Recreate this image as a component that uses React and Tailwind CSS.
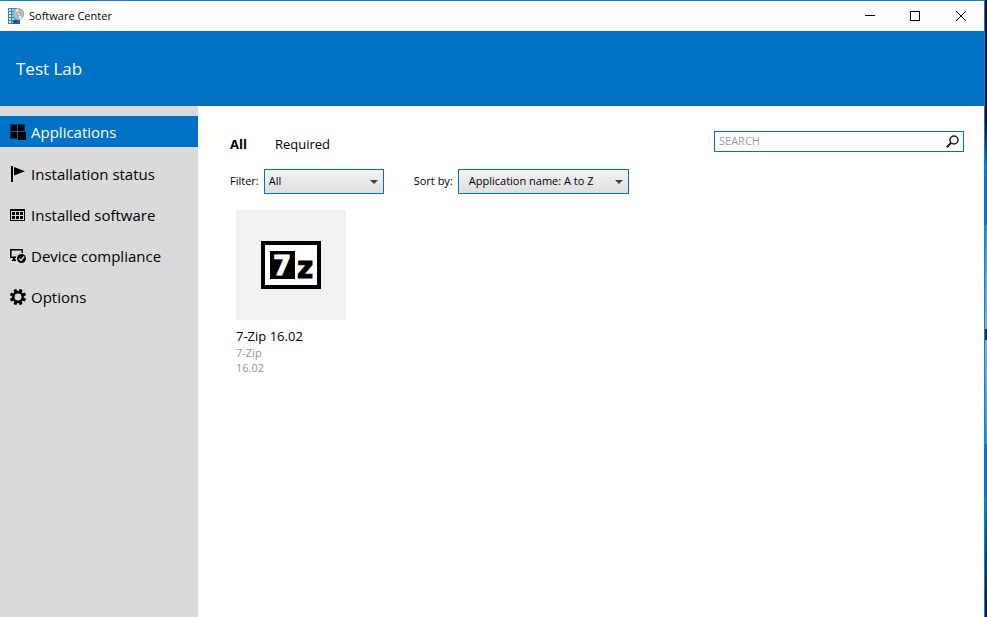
const navItems = [
  { label: 'Applications', icon: AppsIcon, active: true },
  { label: 'Installation status', icon: FlagIcon },
  { label: 'Installed software', icon: GridIcon },
  { label: 'Device compliance', icon: DeviceIcon },
  { label: 'Options', icon: GearIcon },
];

function AppsIcon() {
  return (
    <svg width="16" height="16" viewBox="0 0 16 16" aria-hidden="true">
      <path d="M0 0h15v15H0z" fill="#04335c" />
      <path d="M1 1h6v6H1zM8 1h6v6H8zM1 8h6v6H1z" fill="#000" />
      <path d="M7 1h1v13H7zM1 7h13v1H1z" fill="#0a5ea5" />
      <path d="M8 8h8v8H8z" fill="#000" />
    </svg>
  );
}

function FlagIcon() {
  return (
    <svg width="16" height="16" viewBox="0 0 16 16" aria-hidden="true">
      <path d="M1 0h2v16H1zM4 1l11 4.3L4 9.5z" />
    </svg>
  );
}

function GridIcon() {
  return (
    <svg width="16" height="16" viewBox="0 0 16 16" aria-hidden="true">
      <path fillRule="evenodd" d="M0 2h15v12H0zM1 4v9h13V4z" />
      <path d="M2 5h3v3H2zM6 5h3v3H6zM10 5h3v3h-3zM2 9h3v3H2zM6 9h3v3H6zM10 9h3v3h-3z" />
    </svg>
  );
}

function DeviceIcon() {
  return (
    <svg width="16" height="16" viewBox="0 0 16 16" aria-hidden="true">
      <path d="M6 9.200H.8V1.800h11.400V5" fill="none" stroke="#000" strokeWidth="1.500" />
      <path d="M3 9h2v2.500h1V13H2v-1.500h1z" />
      <circle cx="11.500" cy="10.500" r="4.500" />
      <path d="M9 10.500l2 2 3.200-4" fill="none" stroke="#dadada" strokeWidth="1.400" />
    </svg>
  );
}

function GearIcon() {
  const teeth = [0, 45, 90, 135, 180, 225, 270, 315];
  return (
    <svg width="16" height="16" viewBox="0 0 16 16" aria-hidden="true">
      <circle cx="8" cy="8" r="4.700" fill="none" stroke="#000" strokeWidth="2.500" />
      {teeth.map((angle) => (
        <path key={angle} d="M6.200 3L6.500-.2h3l.3 3.200z" transform={`rotate(${angle + 22.5} 8 8)`} />
      ))}
    </svg>
  );
}

function SoftwareCenterIcon() {
  return (
    <svg width="16" height="16" viewBox="0 0 16 16" aria-hidden="true">
      <path d="M0 0h9v16H0z" fill="#2f86c8" />
      <path d="M1 1h2v2H1zM1 4h2v2H1zM1 7h2v2H1zM1 10h2v2H1zM1 13h2v2H1z" fill="#d8f0fb" />
      <path d="M4 1h4v2H4zM4 4h3v2H4zM4 7h3v2H4zM4 10h3v2H4zM4 13h1v2H4z" fill="#8fcbee" />
      <circle cx="10.500" cy="6" r="5.500" fill="#b9bbbd" stroke="#85898c" strokeWidth=".6" />
      <path d="M10.500 6L7 2a5.300 5.300 0 0 1 3-1.300zM10.500 6l4 3.500a5.300 5.300 0 0 1-3 1.700z" fill="#e6e7e8" />
      <circle cx="10.500" cy="6" r="1.500" fill="#fff" stroke="#777" strokeWidth=".7" />
      <path d="M5 12h7v4H5z" fill="#1467b0" />
      <path d="M6 13h3v1H6z" fill="#0c3d73" />
    </svg>
  );
}

function SevenZipLogo() {
  return (
    <svg width="60" height="48" viewBox="0 0 60 48" role="img" aria-label="7-Zip logo">
      <rect width="60" height="48" fill="#000" />
      <rect x="4" y="4" width="52" height="40" fill="#fff" />
      <rect x="9" y="10" width="25" height="28" fill="#000" />
      <text x="12" y="34" fill="#fff" stroke="#fff" strokeWidth="1" className="font-['DejaVu_Sans',sans-serif] text-[26px] font-bold">7</text>
      <text x="36" y="37" fill="#000" stroke="#000" strokeWidth="1" className="font-['DejaVu_Sans_Condensed','DejaVu_Sans',sans-serif] text-[31px] font-bold">z</text>
    </svg>
  );
}

function Dropdown({ id, label, value, boxClass }) {
  return (
    <div className="flex items-center gap-[5px]">
      <label htmlFor={id}>{label}</label>
      <div className="relative">
        <select
          id={id}
          className={`block h-[25px] appearance-none border border-[#0072c6] bg-linear-to-b from-[#f3f3f3] to-[#dfdfdf] ${boxClass}`}
        >
          <option>{value}</option>
        </select>
        <svg className="pointer-events-none absolute top-[11px] right-[6px]" width="8" height="4" viewBox="0 0 8 4" aria-hidden="true">
          <path d="M0 0h8L4 4z" fill="#404040" />
        </svg>
      </div>
    </div>
  );
}

export default function App() {
  return (
    <div className="flex min-h-screen bg-white font-['Open_Sans','Noto_Sans',sans-serif] text-[11px] text-black">
      <div className="flex min-w-0 flex-1 flex-col border-t border-r border-[#1a7dcc]">
        <div className="flex h-[30px] shrink-0 items-center pl-2">
          <SoftwareCenterIcon />
          <span className="ml-[5px] flex-1">Software Center</span>
          <button aria-label="Minimize" className="flex h-full w-[45px] items-center justify-center">
            <svg width="10" height="10" viewBox="0 0 10 10"><path d="M0 4h10v1H0z" /></svg>
          </button>
          <button aria-label="Maximize" className="flex h-full w-[46px] items-center justify-center">
            <svg width="10" height="10" viewBox="0 0 10 10" fill="none" stroke="#000"><path d="M.5.5h9v9h-9z" /></svg>
          </button>
          <button aria-label="Close" className="flex h-full w-[46px] items-center justify-center">
            <svg width="10" height="10" viewBox="0 0 10 10" fill="none" stroke="#000"><path d="M0 0l10 10M10 0L0 10" /></svg>
          </button>
        </div>

        <header className="flex h-[75px] shrink-0 items-center bg-[#0072c6] px-4 pt-px">
          <h1 className="text-[17px] text-white">Test Lab</h1>
        </header>

        <div className="flex flex-1">
          <nav className="flex w-[198px] shrink-0 flex-col gap-[10px] bg-[#dadada] pt-[10px]">
            {navItems.map(({ label, icon: Icon, active }) => (
              <a
                key={label}
                href="#"
                className={`flex h-[31px] items-center gap-[5px] pl-[10px] text-[15px] ${active ? 'mb-px bg-[#0072c6] text-white' : ''}`}
              >
                <Icon />
                <span className="pt-px">{label}</span>
              </a>
            ))}
          </nav>

          <main className="min-w-0 flex-1 pt-[25px] pr-5 pl-8">
            <div className="flex items-start justify-between">
              <div className="flex gap-7 pt-[3px] text-[13px] leading-5">
                <button className="font-bold">All</button>
                <button>Required</button>
              </div>
              <form className="flex h-[21px] w-[250px] items-center border border-[#0072c6] pr-1 pl-1">
                <input
                  aria-label="Search"
                  placeholder="SEARCH"
                  className="min-w-0 flex-1 outline-none placeholder:text-[#9b9b9b]"
                />
                <button type="button" aria-label="Search">
                  <svg width="13" height="13" viewBox="0 0 13 13" fill="none" stroke="#1a1a1a">
                    <circle cx="8" cy="5" r="4" strokeWidth="1.500" />
                    <path d="M5 8L.8 12.200" strokeWidth="2" />
                  </svg>
                </button>
              </form>
            </div>

            <div className="mt-[15px] flex gap-[30px]">
              <Dropdown id="filter" label="Filter:" value="All" boxClass="w-[120px] pl-1" />
              <Dropdown id="sort" label="Sort by:" value="Application name: A to Z" boxClass="w-[171px] pl-[10px]" />
            </div>

            <article className="mt-4 ml-[6px] w-[110px]">
              <div className="flex h-[110px] items-center justify-center bg-[#f1f1f1]">
                <SevenZipLogo />
              </div>
              <h2 className="mt-[7px] text-[13px] leading-[18px]">7-Zip 16.02</h2>
              <p className="leading-[15px] text-[#959595]">7-Zip</p>
              <p className="leading-[15px] text-[#959595]">16.02</p>
            </article>
          </main>
        </div>
      </div>
      <div aria-hidden="true" className="flex w-[2px] shrink-0 flex-col">
        <div className="h-[120px] bg-[#00132b]" />
        <div className="h-[50px] bg-linear-to-b from-[#00132b] to-[#0a86dc]" />
        <div className="h-[55px] bg-[#0a70cc]" />
        <div className="h-[104px] bg-linear-to-b from-[#2a90cf] to-[#7db4d8]" />
        <div className="h-[11px] bg-[#0a315e]" />
        <div className="h-[104px] bg-linear-to-b from-[#7db4d8] to-[#2a90cf]" />
        <div className="h-[55px] bg-[#0a70cc]" />
        <div className="flex-1 bg-linear-to-b from-[#0a80c8] to-[#00132b]" />
      </div>
    </div>
  );
}
